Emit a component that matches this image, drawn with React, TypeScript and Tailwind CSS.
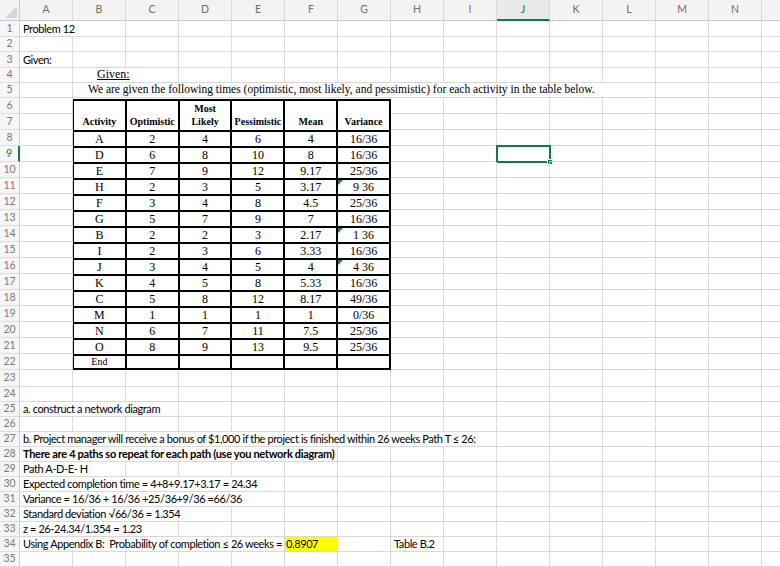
import React from "react";

const COLS = ["A", "B", "C", "D", "E", "F", "G", "H", "I", "J", "K", "L", "M", "N"];

const SPAN: Record<number, string> = {
  1: "col-span-1",
  2: "col-span-2",
  3: "col-span-3",
  4: "col-span-4",
  5: "col-span-5",
  6: "col-span-6",
  7: "col-span-7",
  8: "col-span-8",
  9: "col-span-9",
  10: "col-span-10",
  11: "col-span-11",
};

type Cell = { span?: number; text?: React.ReactNode; cls?: string };

const serif = "font-['Liberation_Serif',serif]";

const CONTENT: Record<number, Cell[]> = {
  1: [{ span: 2, text: "Problem 12" }],
  3: [{ text: "Given:" }],
  4: [
    {},
    {
      span: 2,
      text: <span className={`${serif} ml-[21px] text-[12px] tracking-normal underline`}>Given:</span>,
    },
  ],
  5: [
    {},
    {
      span: 11,
      text: (
        <span className={`${serif} ml-[12px] text-[11.5px] tracking-normal`}>
          We are given the following times (optimistic, most likely, and pessimistic) for each activity in the table below.
        </span>
      ),
    },
  ],
  25: [{ span: 3, text: "a. construct a network diagram" }],
  27: [
    {
      span: 9,
      text: "b. Project manager will receive a bonus of $1,000 if the project is finished within 26 weeks Path T ≤ 26:",
    },
  ],
  28: [
    {
      span: 6,
      text: "There are 4 paths so repeat for each path (use you network diagram)",
      cls: "font-bold !tracking-[-0.3px]",
    },
  ],
  29: [{ span: 2, text: "Path A-D-E- H" }],
  30: [{ span: 5, text: "Expected completion time = 4+8+9.17+3.17 = 24.34" }],
  31: [{ span: 5, text: "Variance = 16/36 + 16/36 +25/36+9/36 =66/36" }],
  32: [{ span: 4, text: "Standard deviation √66/36 = 1.354" }],
  33: [{ span: 3, text: "z = 26-24.34/1.354 = 1.23" }],
  34: [
    { span: 5, text: "Using Appendix B:  Probability of completion ≤ 26 weeks = " },
    { text: "0.8907", cls: "bg-[#ffff00] !pl-[1px]" },
    {},
    { text: "Table B.2" },
  ],
};

const DATA: [string, string, string, string, string, string, boolean][] = [
  ["A", "2", "4", "6", "4", "16/36", false],
  ["D", "6", "8", "10", "8", "16/36", false],
  ["E", "7", "9", "12", "9.17", "25/36", false],
  ["H", "2", "3", "5", "3.17", "9 36", true],
  ["F", "3", "4", "8", "4.5", "25/36", false],
  ["G", "5", "7", "9", "7", "16/36", false],
  ["B", "2", "2", "3", "2.17", "1 36", true],
  ["I", "2", "3", "6", "3.33", "16/36", false],
  ["J", "3", "4", "5", "4", "4 36", true],
  ["K", "4", "5", "8", "5.33", "16/36", false],
  ["C", "5", "8", "12", "8.17", "49/36", false],
  ["M", "1", "1", "1", "1", "0/36", false],
  ["N", "6", "7", "11", "7.5", "25/36", false],
  ["O", "8", "9", "13", "9.5", "25/36", false],
];

function rowCells(r: number) {
  const out: { col: number; span: number; text?: React.ReactNode; cls?: string }[] = [];
  const given = CONTENT[r] ?? [];
  let col = 0;
  for (const c of given) {
    const span = c.span ?? 1;
    out.push({ col, span, text: c.text, cls: c.cls });
    col += span;
  }
  const inTable = r >= 6 && r <= 22;
  while (col < 14) {
    if (inTable && col >= 1 && col <= 6) {
      col = 7;
      continue;
    }
    out.push({ col, span: 1 });
    col += 1;
  }
  return out;
}

function PertTable() {
  return (
    <div
      className={`${serif} col-start-3 col-end-9 row-start-7 row-end-24 self-start -ml-[1px] mt-[1px] grid grid-cols-6 grid-rows-[29px_repeat(14,14px)_12px] gap-[2px] bg-black p-[2px] text-black`}
    >
      {["Activity", "Optimistic", "Most Likely", "Pessimistic", "Mean", "Variance"].map((h) => (
        <div key={h} className="flex items-end justify-center bg-white pb-[2px] text-center text-[10px] font-bold leading-[13px]">
          {h === "Most Likely" ? (
            <span>
              Most
              <br />
              Likely
            </span>
          ) : (
            h
          )}
        </div>
      ))}
      {DATA.map((row) => (
        <React.Fragment key={row[0]}>
          {row.slice(0, 6).map((v, i) => (
            <div key={i} className="relative flex items-center justify-center bg-white text-[12px] leading-none">
              {i === 5 && row[6] && (
                <span className="absolute left-0 top-0 h-0 w-0 border-r-[5px] border-t-[5px] border-r-transparent border-t-[#1f7a2f]" />
              )}
              {v}
            </div>
          ))}
        </React.Fragment>
      ))}
      <div className="flex items-center justify-center bg-white text-[10px] leading-none">End</div>
      {[0, 1, 2, 3, 4].map((i) => (
        <div key={i} className="bg-white" />
      ))}
    </div>
  );
}

export default function App() {
  const rows = Array.from({ length: 35 }, (_, i) => i + 1);
  return (
    <div className="h-[567px] w-[780px] overflow-hidden bg-white font-['Lato',sans-serif] text-[11px] text-black">
      <div className="grid grid-cols-[20px_repeat(14,53px)_1fr] grid-rows-[21px_16px_15px_16px_15px_15px_repeat(17,16px)_17px_repeat(12,15px)]">
        {/* column headers */}
        <div className="relative border-b border-r border-[#c9c9c9] bg-[#f3f3f3]">
          <svg className="absolute bottom-[2px] right-[2px]" width="12" height="12" viewBox="0 0 12 12">
            <path d="M12 0 L12 12 L0 12 Z" fill="#d6d6d6" />
          </svg>
        </div>
        {COLS.map((c) => (
          <div
            key={c}
            className={`flex items-center justify-center border-r border-[#d9d9d9] text-[10.5px] ${
              c === "J"
                ? "border-b-2 border-b-[#107c41] bg-[#e9e9e9] text-[#107c41]"
                : "border-b border-b-[#c9c9c9] bg-[#f3f3f3] text-[#6f6f6f]"
            }`}
          >
            {c}
          </div>
        ))}
        <div className="border-b border-[#c9c9c9] bg-[#f3f3f3]" />

        {rows.map((r) => (
          <React.Fragment key={r}>
            <div
              className={`flex items-center justify-center border-b border-[#dedede] bg-[#f6f6f6] text-[10.5px] ${
                r === 9 ? "border-r-2 border-r-[#107c41] text-[#107c41]" : "border-r border-r-[#cfcfcf] text-[#7a7a7a]"
              }`}
            >
              {r}
            </div>
            {rowCells(r).map((c) => (
              <div
                key={c.col}
                className={`relative flex items-end whitespace-pre border-b border-r border-[#d9d9d9] pb-[1px] pl-[3px] leading-[13px] tracking-[-0.4px] ${SPAN[c.span]} ${
                  c.cls ?? ""
                }`}
              >
                {c.text}
                {r === 9 && c.col === 9 && (
                  <>
                    <span className="absolute -left-[1px] -top-[1px] h-[18px] w-[55px] border-2 border-[#107c41]" />
                    <span className="absolute left-[50px] top-[13px] h-[6px] w-[6px] border border-white bg-[#107c41]" />
                  </>
                )}
              </div>
            ))}
            <div className="border-b border-[#d9d9d9]" />
          </React.Fragment>
        ))}

        <PertTable />
      </div>
    </div>
  );
}
